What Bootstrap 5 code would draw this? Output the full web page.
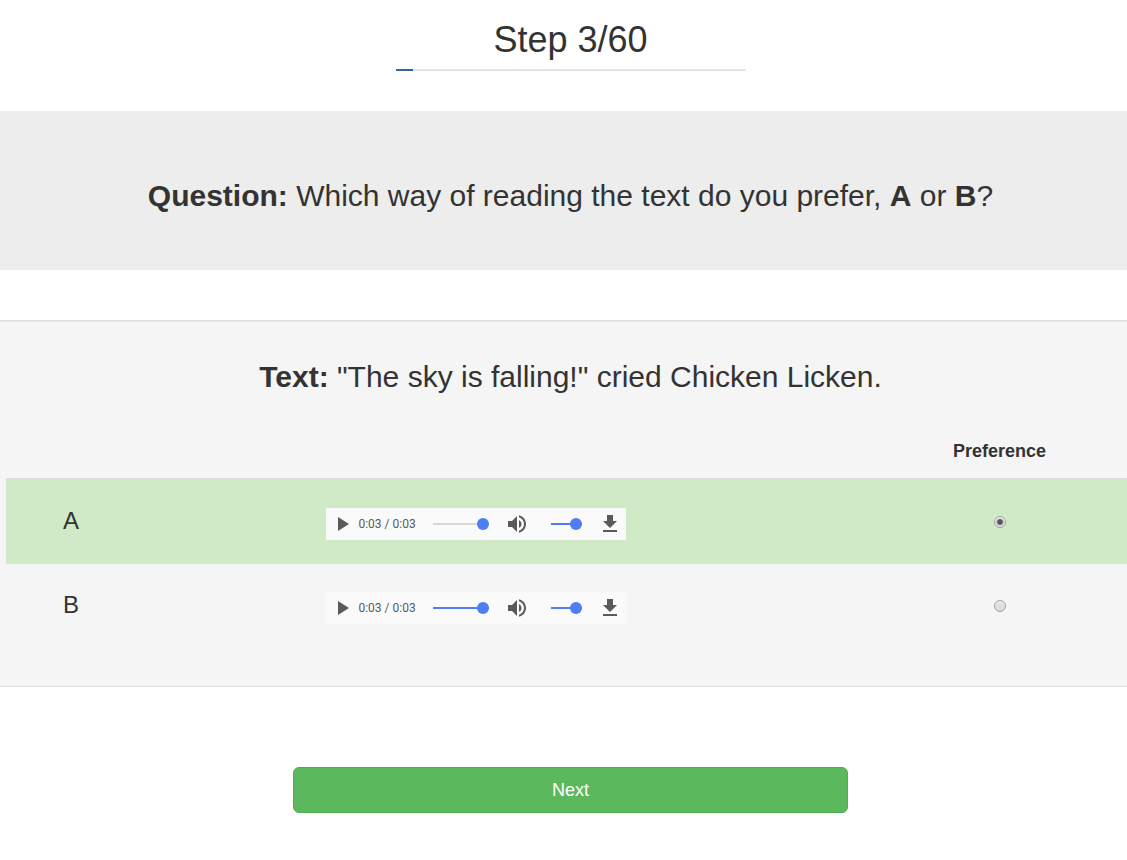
<!DOCTYPE html>
<html lang="en">
<head>
<meta charset="utf-8">
<meta name="viewport" content="width=device-width, initial-scale=1">
<title>Step 3/60</title>
<link href="https://cdn.jsdelivr.net/npm/bootstrap@5.3.0/dist/css/bootstrap.min.css" rel="stylesheet">
<style>
body { font-family: "Liberation Sans", Arial, sans-serif; color: #333; overflow-x: hidden; }
/* The sheet runs a little past the right edge of the window */
.sheet { margin-right: -14px; }
.step-title { font-size: 36px; line-height: 40px; font-weight: 400; margin: 0 0 9px; padding-top: 20px; }
.step-progress { width: 350px; height: 2px; border-radius: 0; background: #e4e4e4; margin-bottom: 40px; }
.step-progress .progress-bar { background: #336699; }
.question-band { background: #ededed; padding: 68px 0 58px; margin-bottom: 50px; }
.line-text { font-size: 30px; line-height: 33px; font-weight: 400; margin: 0; }
.trial { background: #f5f5f5; border-top: 1px solid #dedede; border-bottom: 1px solid #dedede; box-shadow: inset 0 1px 1px rgba(0,0,0,.05); padding: 39px 6px; margin-bottom: 80px; }
.choices { --bs-table-bg: transparent; --bs-table-color: #333; table-layout: fixed; margin: 38px 0 0; color: #333; }
.choices > :not(caption) > * > * { border: 0; padding: 8px; text-align: center; }
.choices thead th { font-size: 18px; line-height: 25px; padding-bottom: 14px; border-bottom: 2px solid #ddd; }
.choices tbody th { font-size: 24px; line-height: 26px; font-weight: 400; vertical-align: top; padding-top: 28px; }
.choices tbody td { vertical-align: top; padding-top: 28px; }
.choices tbody tr { height: 84px; }
.choices tbody tr + tr > * { border-top: 1px solid #ddd; }
.choices tbody tr.picked > * { background: #d0e9c6; }
.choices tbody td.clip { padding-right: 47px; padding-left: 0; }
.col-letter { width: 11.5%; }
.col-pick { width: 24%; }
.player { width: 300px; height: 32px; background: #fafafa; font: 12px/32px Roboto, sans-serif; color: #5a5a5a; padding-left: 4px; }
.player button { border: 0; background: none; padding: 0; width: 24px; height: 24px; display: flex; }
.player svg { width: 24px; height: 24px; fill: #5a5a5a; }
.player .clock { width: 75px; margin-left: 4px; text-align: left; }
.slide { appearance: none; -webkit-appearance: none; height: 12px; margin: 0; background: linear-gradient(#4f7df3, #4f7df3) center / 100% 2px no-repeat; }
.slide.idle { background-image: linear-gradient(#d9d9d9, #d9d9d9); }
.slide::-webkit-slider-thumb { -webkit-appearance: none; width: 12px; height: 12px; border-radius: 50%; background: #4f7df3; }
.slide::-moz-range-thumb { border: 0; width: 12px; height: 12px; border-radius: 50%; background: #4f7df3; }
.seek { width: 56px; margin-right: 16px; }
.volume { width: 31px; margin: 0 16px 0 22px; }
.pick { appearance: none; -webkit-appearance: none; display: block; width: 12px; height: 12px; margin: 8px auto 0; border: 1px solid #a3a3a3; border-radius: 50%; background: linear-gradient(#e4e4e4, #dadada); box-shadow: inset 0 1px 0 #f2f2f2; }
.pick:checked { background: radial-gradient(circle, #555 0 2px, #e6e6e6 4px); }
.next-btn { width: 555px; height: 46px; font-size: 18px; border-radius: 6px; --bs-btn-color: #fff; --bs-btn-bg: #5cb85c; --bs-btn-border-color: #4cae4c; --bs-btn-hover-color: #fff; --bs-btn-hover-bg: #449d44; }
</style>
</head>
<body>
<main class="sheet text-center">
  <h1 class="step-title">Step 3/60</h1>
  <div class="progress step-progress mx-auto" role="progressbar" aria-label="Progress" aria-valuenow="3" aria-valuemin="0" aria-valuemax="60">
    <div class="progress-bar" style="width:5%"></div>
  </div>

  <section class="question-band">
    <h2 class="line-text"><strong>Question:</strong> Which way of reading the text do you prefer, <strong>A</strong> or <strong>B</strong>?</h2>
  </section>

  <form>
    <section class="trial">
      <h2 class="line-text"><strong>Text:</strong> "The sky is falling!" cried Chicken Licken.</h2>
      <table class="table choices">
        <colgroup><col class="col-letter"><col><col class="col-pick"></colgroup>
        <thead><tr><th></th><th></th><th scope="col">Preference</th></tr></thead>
        <tbody>
          <tr class="picked">
            <th scope="row"><label for="pickA">A</label></th>
            <td class="clip">
              <div class="player d-flex align-items-center mx-auto">
                <button type="button" aria-label="Play A"><svg viewBox="0 0 24 24"><path d="M8 5v14l11-7z"/></svg></button>
                <span class="clock">0:03 / 0:03</span>
                <input type="range" class="slide idle seek" aria-label="Position A" max="3" value="3">
                <button type="button" aria-label="Mute A"><svg viewBox="0 0 24 24"><path d="M3 9v6h4l5 5V4L7 9H3zm13.5 3c0-1.77-1.02-3.29-2.5-4.03v8.05c1.48-.73 2.5-2.25 2.5-4.02zM14 3.23v2.06c2.89.86 5 3.54 5 6.71s-2.11 5.85-5 6.71v2.06c4.01-.91 7-4.49 7-8.77s-2.99-7.86-7-8.77z"/></svg></button>
                <input type="range" class="slide volume" aria-label="Volume A" value="100">
                <button type="button" aria-label="Download A"><svg viewBox="0 0 24 24"><path d="M19 9h-4V3H9v6H5l7 7 7-7zM5 18v2h14v-2H5z"/></svg></button>
              </div>
            </td>
            <td><input type="radio" class="pick" name="preference" id="pickA" checked></td>
          </tr>
          <tr>
            <th scope="row"><label for="pickB">B</label></th>
            <td class="clip">
              <div class="player d-flex align-items-center mx-auto">
                <button type="button" aria-label="Play B"><svg viewBox="0 0 24 24"><path d="M8 5v14l11-7z"/></svg></button>
                <span class="clock">0:03 / 0:03</span>
                <input type="range" class="slide seek" aria-label="Position B" max="3" value="3">
                <button type="button" aria-label="Mute B"><svg viewBox="0 0 24 24"><path d="M3 9v6h4l5 5V4L7 9H3zm13.5 3c0-1.77-1.02-3.29-2.5-4.03v8.05c1.48-.73 2.5-2.25 2.5-4.02zM14 3.23v2.06c2.89.86 5 3.54 5 6.71s-2.11 5.85-5 6.71v2.06c4.01-.91 7-4.49 7-8.77s-2.99-7.86-7-8.77z"/></svg></button>
                <input type="range" class="slide volume" aria-label="Volume B" value="100">
                <button type="button" aria-label="Download B"><svg viewBox="0 0 24 24"><path d="M19 9h-4V3H9v6H5l7 7 7-7zM5 18v2h14v-2H5z"/></svg></button>
              </div>
            </td>
            <td><input type="radio" class="pick" name="preference" id="pickB"></td>
          </tr>
        </tbody>
      </table>
    </section>
    <button type="submit" class="btn next-btn">Next</button>
  </form>
</main>
<script src="https://cdn.jsdelivr.net/npm/bootstrap@5.3.0/dist/js/bootstrap.bundle.min.js"></script>
</body>
</html>
